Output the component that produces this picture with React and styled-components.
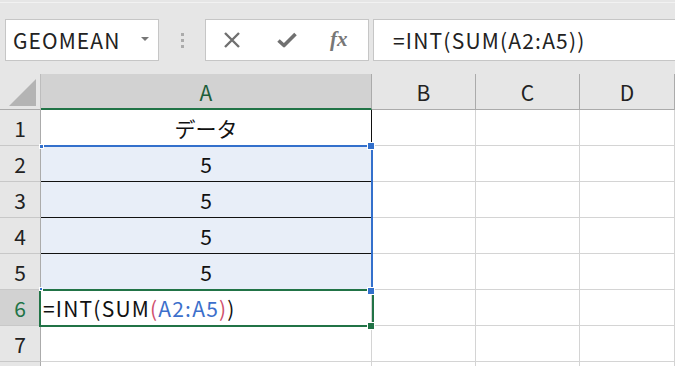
import React from "react";
import styled, { createGlobalStyle } from "styled-components";

const Global = createGlobalStyle`
  html, body { margin: 0; padding: 0; background: #e6e6e6; overflow: hidden; }
  * { box-sizing: border-box; }
`;

const FONT = `"Noto Sans CJK JP", "Noto Sans", sans-serif`;

const Page = styled.div`
  width: 675px;
  height: 366px;
  overflow: hidden;
  background: #e6e6e6;
  display: flex;
  flex-direction: column;
  font-family: ${FONT};
`;

const Toolbar = styled.div`
  height: 74px;
  flex: none;
  display: flex;
  align-items: flex-start;
  padding: 18px 0 0 5px;
  border-top: 1px solid #e6e6e6;
  position: relative;
  &::before {
    content: "";
    position: absolute;
    left: 0; right: 0; top: 1px;
    height: 1px;
    background: #f2f2f2;
  }
`;

const NameBox = styled.div`
  width: 154px;
  height: 42px;
  background: #fff;
  border: 1px solid #c6c6c6;
  display: flex;
  align-items: center;
  padding-left: 7px;
  font-size: 21px;
  letter-spacing: 1.1px;
  color: #222;
`;

const NameText = styled.span`
  flex: 1;
`;

const Caret = styled.span`
  width: 0;
  height: 0;
  border-left: 4px solid transparent;
  border-right: 4px solid transparent;
  border-top: 4px solid #777;
  margin-right: 9px;
  margin-top: -3px;
`;

const Grip = styled.div`
  width: 46px;
  height: 42px;
  display: flex;
  flex-direction: column;
  align-items: center;
  justify-content: center;
  gap: 3px;
`;

const GripDot = styled.span`
  width: 3px;
  height: 3px;
  background: #ababab;
`;

const FxBox = styled.div`
  width: 164px;
  height: 42px;
  background: #fff;
  border: 1px solid #c6c6c6;
  display: flex;
  align-items: center;
  padding-left: 17px;
`;

const FxButton = styled.span`
  width: ${(p) => p.$w}px;
  display: flex;
  align-items: center;
  justify-content: flex-start;
  color: #777;
`;

const FxText = styled.span`
  font-family: "Liberation Serif", "DejaVu Serif", serif;
  font-style: italic;
  font-weight: bold;
  font-size: 21px;
  color: #777;
  margin-top: -2px;
`;

const FormulaBar = styled.div`
  flex: 1;
  margin-left: 4px;
  height: 42px;
  background: #fff;
  border: 1px solid #c6c6c6;
  border-right: none;
  display: flex;
  align-items: center;
  padding-left: 19px;
  font-size: 21px;
  letter-spacing: 1.2px;
  color: #222;
`;

const Sheet = styled.div`
  position: relative;
  flex: 1;
  display: grid;
  grid-template-columns: 41px 331px 104px 104px 1fr;
  grid-auto-rows: 36px;
  background: #fff;
  font-family: ${FONT};
`;

const Corner = styled.div`
  background: #e6e6e6;
  border-right: 1px solid #bdbdbd;
  border-bottom: 1px solid #ababab;
  position: relative;
  &::after {
    content: "";
    position: absolute;
    left: 9px;
    top: 5px;
    width: 27px;
    height: 27px;
    background: #b4b4b4;
    clip-path: polygon(100% 0, 100% 100%, 0 100%);
  }
`;

const ColHead = styled.div`
  background: ${(p) => (p.$sel ? "#d2d2d2" : "#e6e6e6")};
  border-right: 1px solid #ababab;
  border-bottom: ${(p) => (p.$sel ? "2px solid #217346" : "1px solid #ababab")};
  display: flex;
  align-items: center;
  justify-content: center;
  font-size: 21px;
  color: ${(p) => (p.$sel ? "#1d5e3a" : "#222")};
  padding-top: ${(p) => (p.$sel ? "1px" : "0")};
`;

const RowHead = styled.div`
  background: ${(p) => (p.$sel ? "#d2d2d2" : "#e6e6e6")};
  border-right: 1px solid #ababab;
  border-bottom: 1px solid #c8c8c8;
  display: flex;
  align-items: center;
  justify-content: center;
  font-size: 21px;
  color: ${(p) => (p.$sel ? "#217346" : "#222")};
`;

const Cell = styled.div`
  background: ${(p) => (p.$fill ? "#e8eef8" : "#fff")};
  border-right: 1px solid ${(p) => p.$right || "#d4d4d4"};
  border-bottom: 1px solid ${(p) => p.$bottom || "#d4d4d4"};
  display: flex;
  align-items: center;
  justify-content: ${(p) => (p.$left ? "flex-start" : "center")};
  padding-left: ${(p) => (p.$left ? "2px" : "0")};
  font-size: 21px;
  letter-spacing: ${(p) => (p.$left ? "1.2px" : "0")};
  color: #111;
  white-space: nowrap;
`;

const Ref = styled.span`
  color: #3c6fcb;
`;
const Paren = styled.span`
  color: #d0506e;
`;

const SelBlue = styled.div`
  position: absolute;
  left: 40px;
  top: 71px;
  width: 333px;
  height: 145px;
  border-top: 2px solid #3370cc;
  border-right: 2px solid #3370cc;
  pointer-events: none;
`;

const SelGreen = styled.div`
  position: absolute;
  left: 39px;
  top: 215px;
  width: 335px;
  height: 38px;
  border: 2px solid #217346;
  pointer-events: none;
`;

const Handle = styled.div`
  position: absolute;
  left: ${(p) => p.$x}px;
  top: ${(p) => p.$y}px;
  width: ${(p) => p.$s}px;
  height: ${(p) => p.$s}px;
  background: ${(p) => p.$c};
  outline: 1px solid #fff;
`;

const XIcon = () => (
  <svg width="18" height="16" viewBox="0 0 18 16">
    <path d="M2 1 L16 15 M16 1 L2 15" stroke="#707070" strokeWidth="2.4" fill="none" />
  </svg>
);

const CheckIcon = () => (
  <svg width="20" height="16" viewBox="0 0 20 16">
    <path d="M1.5 8.5 L7 13.5 L18.5 2" stroke="#707070" strokeWidth="3.6" fill="none" strokeLinejoin="round" />
  </svg>
);

const rows = [
  { n: 1, a: "データ", right: "#111" },
  { n: 2, a: "5", fill: true, bottom: "#111" },
  { n: 3, a: "5", fill: true, bottom: "#111" },
  { n: 4, a: "5", fill: true, bottom: "#111" },
  { n: 5, a: "5", fill: true },
  { n: 6, formula: true, sel: true },
  { n: 7 },
  { n: 8, hidden: true },
];

export default function App() {
  return (
    <>
      <Global />
      <Page>
        <Toolbar>
          <NameBox>
            <NameText>GEOMEAN</NameText>
            <Caret />
          </NameBox>
          <Grip>
            <GripDot />
            <GripDot />
            <GripDot />
          </Grip>
          <FxBox>
            <FxButton $w={54}><XIcon /></FxButton>
            <FxButton $w={53}><CheckIcon /></FxButton>
            <FxButton $w={30}><FxText>fx</FxText></FxButton>
          </FxBox>
          <FormulaBar>=INT(SUM(A2:A5))</FormulaBar>
        </Toolbar>
        <Sheet>
          <Corner />
          <ColHead $sel>A</ColHead>
          <ColHead>B</ColHead>
          <ColHead>C</ColHead>
          <ColHead>D</ColHead>
          {rows.map((r) => (
            <React.Fragment key={r.n}>
              <RowHead $sel={r.sel}>{r.hidden ? "" : r.n}</RowHead>
              <Cell $fill={r.fill} $right={r.right} $bottom={r.bottom} $left={r.formula}>
                {r.formula ? (
                  <>
                    =INT(SUM<Paren>(</Paren><Ref>A2:A5</Ref><Paren>)</Paren>)
                  </>
                ) : (
                  r.a
                )}
              </Cell>
              <Cell />
              <Cell />
              <Cell />
            </React.Fragment>
          ))}
          <SelBlue />
          <SelGreen />
          <Handle $x={40} $y={71} $s={3} $c="#3370cc" />
          <Handle $x={368} $y={69} $s={6} $c="#3370cc" />
          <Handle $x={40} $y={214} $s={2} $c="#3370cc" />
          <Handle $x={368} $y={214} $s={6} $c="#3370cc" />
          <Handle $x={368} $y={249} $s={6} $c="#217346" />
        </Sheet>
      </Page>
    </>
  );
}
